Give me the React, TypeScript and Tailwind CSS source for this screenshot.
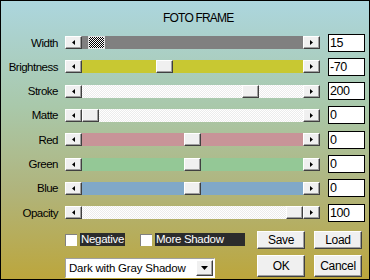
import React from "react";

const dither =
  "bg-[repeating-conic-gradient(#ffffff_0_25%,#ececec_0_50%)] bg-[length:2px_2px]";

const rows = [
  { label: "Width", track: "bg-[#808080]", thumb: 6, checker: true, value: "15" },
  { label: "Brightness", track: "bg-[#c8c832]", thumb: 74, value: "-70" },
  { label: "Stroke", track: dither, thumb: 160, value: "200" },
  { label: "Matte", track: dither, thumb: 0, value: "0" },
  { label: "Red", track: "bg-[#c89498]", thumb: 102, value: "0" },
  { label: "Green", track: "bg-[#94c896]", thumb: 102, value: "0" },
  { label: "Blue", track: "bg-[#80a8c8]", thumb: 102, value: "0" },
  { label: "Opacity", track: dither, thumb: 204, value: "100" },
];

const raised =
  "bg-[#f0f0f0] border-t border-l border-t-white border-l-white border-r border-b border-r-[#404040] border-b-[#404040] shadow-[inset_-1px_-1px_0_#a0a0a0]";

const Arrow = ({ dir }: { dir: "left" | "right" | "down" }) => {
  if (dir === "down")
    return (
      <svg width="7" height="4" viewBox="0 0 7 4">
        <path d="M0 0h7L3.5 4z" fill="#000" />
      </svg>
    );
  return (
    <svg width="3" height="5" viewBox="0 0 3 5">
      <path d={dir === "left" ? "M3 0v5L0 2.5z" : "M0 0v5l3-2.5z"} fill="#000" />
    </svg>
  );
};

const Slider = ({ track, thumb, checker }: { track: string; thumb: number; checker?: boolean }) => (
  <div className="ml-[7px] w-[255px] h-[13px] flex">
    <div className={`w-[17px] h-full flex items-center justify-center ${raised}`}>
      <Arrow dir="left" />
    </div>
    <div className={`relative flex-1 h-full ${track}`}>
      <div
        className={`absolute top-0 w-[17px] h-full ${
          checker
            ? "border border-[#e0e0e0] bg-[repeating-conic-gradient(#000_0_25%,#fff_0_50%)] bg-[length:2px_2px]"
            : raised
        }`}
        style={{ left: thumb }}
      />
    </div>
    <div className={`w-[17px] h-full flex items-center justify-center ${raised}`}>
      <Arrow dir="right" />
    </div>
  </div>
);

const Btn = ({ children, h }: { children: React.ReactNode; h: string }) => (
  <div className={`w-[48px] ${h} flex items-center justify-center text-[12px] tracking-[-0.3px] ${raised}`}>
    {children}
  </div>
);

export default function App() {
  return (
    <div className="w-[370px] h-[280px] overflow-hidden border border-black bg-[linear-gradient(to_bottom,#acd6de_0%,#a9c8aa_38%,#b0b47c_68%,#bca63c_100%)] font-['Liberation_Sans',Arial,sans-serif] text-black flex flex-col">
      <div className="h-[29.4px] pl-[162px] pt-[10px] text-[12px] leading-[14px] tracking-[-0.8px]">FOTO FRAME</div>

      {rows.map((r) => (
        <div key={r.label} className="h-[24.3px] flex items-center">
          <div className="w-[57px] text-right text-[11.5px] leading-[14px] tracking-[-0.5px]">{r.label}</div>
          <Slider track={r.track} thumb={r.thumb} checker={r.checker} />
          <div className="ml-[8px] w-[37px] h-[18px] bg-white border border-black pl-[1px] text-[12.5px] leading-[16px] tracking-[-0.4px]">
            {r.value}
          </div>
        </div>
      ))}

      <div className="mt-[6px] h-[18px] flex items-center pl-[64px] text-[11.5px] tracking-[-0.3px]">
        <div className="w-[12px] h-[12px] bg-white border-t border-l border-[#808080]" />
        <div className="ml-[3px] w-[45px] h-[13px] bg-[#2c2c2c] text-white leading-[13px] pl-[1px]">
          Negative
        </div>
        <div className="ml-[15px] w-[12px] h-[12px] bg-white border-t border-l border-[#808080]" />
        <div className="ml-[3px] w-[90px] h-[13px] bg-[#2c2c2c] text-white leading-[13px] pl-[1px]">
          More Shadow
        </div>
        <div className="ml-[12px]">
          <Btn h="h-[18px]">Save</Btn>
        </div>
        <div className="ml-[9px]">
          <Btn h="h-[18px]">Load</Btn>
        </div>
      </div>

      <div className="mt-[6px] h-[22px] flex items-end pl-[64px]">
        <div className="w-[150px] h-[20px] mb-[-1px] bg-white border-t border-l border-t-[#a0a0a0] border-l-[#a0a0a0] border-r border-b border-r-white border-b-white flex items-center">
          <div className="flex-1 pl-[3px] whitespace-nowrap text-[11.5px] leading-[16px] tracking-[-0.2px]">
            Dark with Gray Shadow
          </div>
          <div className={`w-[17px] h-[16px] mr-[1px] flex items-center justify-center ${raised}`}>
            <Arrow dir="down" />
          </div>
        </div>
        <div className="ml-[42px] self-stretch">
          <Btn h="h-[22px]">OK</Btn>
        </div>
        <div className="ml-[9px] self-stretch">
          <Btn h="h-[22px]">Cancel</Btn>
        </div>
      </div>
    </div>
  );
}
